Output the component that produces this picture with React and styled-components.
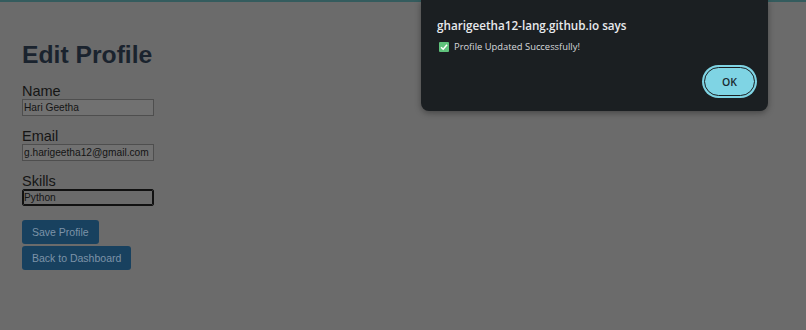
import React from 'react';
import styled, { createGlobalStyle } from 'styled-components';

const GlobalStyle = createGlobalStyle`
  html, body {
    margin: 0;
    padding: 0;
    background: #6b6b6b;
  }
  body {
    font-family: "Liberation Sans", Arial, sans-serif;
    width: 806px;
    height: 330px;
    overflow: hidden;
  }
`;

const App = () => {
  return (
    <>
      <GlobalStyle />
      <Page>
        <TopStrip />
        <Content>
          <Title>Edit Profile</Title>

          <Field>
            <Label>Name</Label>
            <Input defaultValue="Hari Geetha" />
          </Field>

          <Field>
            <Label>Email</Label>
            <Input defaultValue="g.harigeetha12@gmail.com" />
          </Field>

          <Field>
            <Label>Skills</Label>
            <Input defaultValue="Python" $focused />
          </Field>

          <Actions>
            <Button>Save Profile</Button>
            <Button>Back to Dashboard</Button>
          </Actions>
        </Content>

        {/* browser alert box laid over the page */}
        <Dialog>
          <DialogTitle>gharigeetha12-lang.github.io says</DialogTitle>
          <DialogMessage>
            <Check>
              <svg width="10" height="10" viewBox="0 0 10 10">
                <path d="M2 5.2 L4.2 7.2 L8 2.8" fill="none" stroke="#fff" strokeWidth="1.5" />
              </svg>
            </Check>
            Profile Updated Successfully!
          </DialogMessage>
          <DialogFooter>
            <OkButton>OK</OkButton>
          </DialogFooter>
        </Dialog>
      </Page>
    </>
  );
};

// -------------------------------------------------------------------------
// Styled Components:

const Page = styled.div`
  position: relative;
  width: 806px;
  height: 330px;
`;

const TopStrip = styled.div`
  height: 2px;
  background: #345c5e;
`;

const Content = styled.div`
  display: flex;
  flex-direction: column;
  align-items: flex-start;
  padding: 0 22px;
`;

const Title = styled.h2`
  margin: 38px 0 13px;
  font-size: 24.7px;
  font-weight: bold;
  line-height: 30px;
  color: #1a232e;
`;

const Field = styled.div`
  display: flex;
  flex-direction: column;
  align-items: flex-start;
  margin-bottom: 12px;
`;

const Label = styled.label`
  font-size: 14.5px;
  line-height: 16px;
  color: #151515;
`;

const Input = styled.input`
  box-sizing: border-box;
  width: 132px;
  height: 17px;
  margin: 0;
  padding: 0 0 0 1px;
  font-family: "Liberation Sans", Arial, sans-serif;
  font-size: 10.2px;
  color: #141414;
  background: ${({ $focused }) => ($focused ? '#6b6b6b' : '#717171')};
  border: 1px solid ${({ $focused }) => ($focused ? '#111' : '#4e4e4e')};
  border-radius: ${({ $focused }) => ($focused ? '2px' : '0')};
  outline: ${({ $focused }) => ($focused ? '1px solid #111' : 'none')};
  outline-offset: -2px;
`;

const Actions = styled.div`
  display: flex;
  flex-direction: column;
  align-items: flex-start;
  gap: 2px;
  margin-top: 2px;
`;

const Button = styled.button`
  height: 24px;
  padding: 0 10px;
  font-family: "Liberation Sans", Arial, sans-serif;
  font-size: 10.5px;
  color: #7d93a8;
  background: #18415f;
  border: none;
  border-radius: 3px;
`;

const Dialog = styled.div`
  position: absolute;
  top: 0;
  left: 421px;
  box-sizing: border-box;
  width: 347px;
  height: 111px;
  padding: 16px 13px 12px 16px;
  background: #1b1f22;
  border-radius: 0 0 8px 8px;
  box-shadow: 0 2px 6px rgba(0, 0, 0, 0.35);
  font-family: "Open Sans", "Noto Sans", sans-serif;
  color: #e8eaed;
`;

const DialogTitle = styled.div`
  font-size: 11.7px;
  font-weight: 600;
  line-height: 18px;
`;

const DialogMessage = styled.div`
  display: flex;
  align-items: center;
  gap: 5px;
  margin-top: 6px;
  padding-left: 2px;
  font-size: 9.4px;
  line-height: 14px;
  color: #d6d9dc;
`;

const Check = styled.span`
  display: inline-flex;
  align-items: center;
  justify-content: center;
  width: 10px;
  height: 10px;
  background: #5fc27c;
  border-radius: 1px;
`;

const DialogFooter = styled.div`
  display: flex;
  justify-content: flex-end;
  margin-top: 13px;
`;

const OkButton = styled.button`
  width: 51px;
  height: 29px;
  font-family: "Open Sans", "Noto Sans", sans-serif;
  font-size: 10.5px;
  font-weight: 600;
  color: #1a2a30;
  background: #7fd4e4;
  border: 1.5px solid #1b1f22;
  border-radius: 15px;
  box-shadow: 0 0 0 2px #7fd4e4;
`;

export default App;
